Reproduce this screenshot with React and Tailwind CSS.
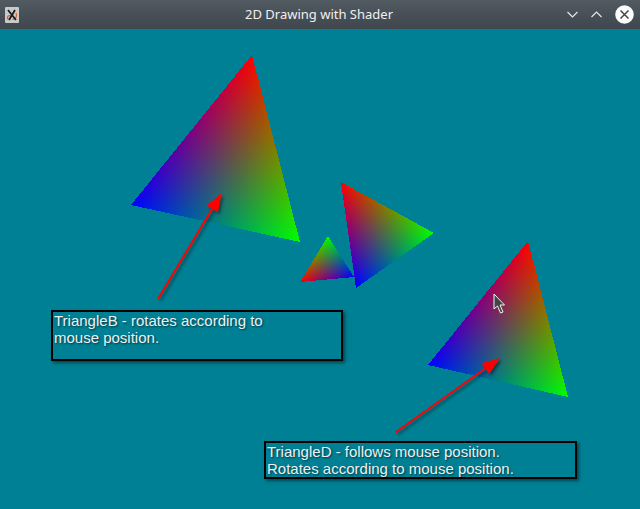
import React from 'react';

const triangles = [
  { id: 'a', pts: [[252, 55], [131, 205], [300, 242]], cols: ['#ff0000', '#0000ff', '#00ff00'] },
  { id: 'b', pts: [[328, 236], [300, 282], [354, 277]], cols: ['#00ff00', '#ff0000', '#0000ff'] },
  { id: 'c', pts: [[341, 182], [434, 233], [356, 288]], cols: ['#ff0000', '#00ff00', '#0000ff'] },
  { id: 'd', pts: [[528, 241], [428, 365], [568, 397]], cols: ['#ff0000', '#0000ff', '#00ff00'] },
];

const arrows = [
  { from: [158, 299], to: [221.5, 193.5] },
  { from: [395.5, 432.5], to: [500, 358] },
];

// foot of the perpendicular from p onto line a-b
function foot(p, a, b) {
  const dx = b[0] - a[0];
  const dy = b[1] - a[1];
  const t = ((p[0] - a[0]) * dx + (p[1] - a[1]) * dy) / (dx * dx + dy * dy);
  return [a[0] + t * dx, a[1] + t * dy];
}

function ShadedTriangle({ tri }) {
  const points = tri.pts.map((p) => p.join(',')).join(' ');
  return (
    <g style={{ isolation: 'isolate' }}>
      <defs>
        {tri.pts.map((p, i) => {
          const f = foot(p, tri.pts[(i + 1) % 3], tri.pts[(i + 2) % 3]);
          return (
            <linearGradient
              key={i}
              id={'g-' + tri.id + i}
              gradientUnits="userSpaceOnUse"
              x1={p[0]}
              y1={p[1]}
              x2={f[0]}
              y2={f[1]}
            >
              <stop offset="0" stopColor={tri.cols[i]} />
              <stop offset="1" stopColor="#000000" />
            </linearGradient>
          );
        })}
      </defs>
      {[0, 1, 2].map((i) => (
        <polygon
          key={i}
          points={points}
          fill={'url(#g-' + tri.id + i + ')'}
          shapeRendering="crispEdges"
          style={i === 0 ? undefined : { mixBlendMode: 'screen' }}
        />
      ))}
    </g>
  );
}

function Arrow({ from, to }) {
  const dx = to[0] - from[0];
  const dy = to[1] - from[1];
  const len = Math.hypot(dx, dy);
  const ux = dx / len;
  const uy = dy / len;
  const bx = to[0] - 18 * ux;
  const by = to[1] - 18 * uy;
  const head = [
    [to[0], to[1]],
    [bx + 6.5 * -uy, by + 6.5 * ux],
    [bx - 6.5 * -uy, by - 6.5 * ux],
  ];
  return (
    <g filter="url(#shadow)">
      <line x1={from[0]} y1={from[1]} x2={bx + 3 * ux} y2={by + 3 * uy} stroke="#ff0000" strokeWidth="2" />
      <polygon points={head.map((p) => p.join(',')).join(' ')} fill="#ff0000" />
    </g>
  );
}

function Note({ className, lines }) {
  return (
    <div
      className={
        'absolute border-2 border-black pl-px text-[15px] leading-[17px] text-[#eef2f4] shadow-[2px_2px_3px_rgba(0,0,0,0.45)] [text-shadow:1px_1px_2px_rgba(0,0,0,0.6)] ' +
        className
      }
    >
      {lines.map((l) => (
        <div key={l} className="whitespace-nowrap">{l}</div>
      ))}
    </div>
  );
}

export default function App() {
  return (
    <div className="w-[640px] h-[509px] flex flex-col overflow-hidden font-['Liberation_Sans',Arial,sans-serif]">
      <div className="h-[29px] flex items-center bg-gradient-to-b from-[#525a62] to-[#3f464d] pl-[5px] pr-[6px]">
        <svg width="14" height="16" viewBox="0 0 14 16">
          <rect x="0" y="0" width="14" height="16" rx="1" fill="#c9cacb" />
          <path d="M3 12.5 C1.5 10 3 8 6 9" stroke="#e0601a" strokeWidth="1.3" fill="none" />
          <path d="M11 6 C12.5 9 11 12 7.5 12.5" stroke="#e0601a" strokeWidth="1.3" fill="none" />
          <path d="M3 3 L11 13 M10 3 L4 13" stroke="#1a1a1a" strokeWidth="1.8" fill="none" />
        </svg>
        <div className="flex-1 text-center text-[13px] text-[#eff0f1] font-['Noto_Sans',sans-serif] pl-[52px]">
          2D Drawing with Shader
        </div>
        <div className="flex items-center gap-[13px]">
          <svg width="11" height="7" viewBox="0 0 11 7">
            <path d="M0.5 1 L5.5 6 L10.5 1" stroke="#e4e7ea" strokeWidth="1.2" fill="none" />
          </svg>
          <svg width="11" height="7" viewBox="0 0 11 7">
            <path d="M0.5 6 L5.5 1 L10.5 6" stroke="#e4e7ea" strokeWidth="1.2" fill="none" />
          </svg>
          <svg width="19" height="19" viewBox="0 0 19 19">
            <circle cx="9.5" cy="9.5" r="9.3" fill="#fcfcfc" />
            <path d="M5.5 5.5 L13.5 13.5 M13.5 5.5 L5.5 13.5" stroke="#3f464d" strokeWidth="1.5" />
          </svg>
        </div>
      </div>

      <div className="relative flex-1 bg-[#008094]">
        <svg className="absolute inset-0" width="640" height="480" viewBox="0 29 640 480">
          <defs>
            <filter id="shadow" x="-20%" y="-20%" width="140%" height="140%">
              <feDropShadow dx="2" dy="2" stdDeviation="1.6" floodColor="#000000" floodOpacity="0.45" />
            </filter>
          </defs>
          {triangles.map((t) => (
            <ShadedTriangle key={t.id} tri={t} />
          ))}
          {arrows.map((a, i) => (
            <Arrow key={i} from={a.from} to={a.to} />
          ))}
          <path
            d="M494 294 L494 309 L497.5 306 L500.5 313 L503 312 L500 305 L504.5 305 Z"
            fill="#444444"
            stroke="#f2f2f2"
            strokeWidth="1"
            strokeLinejoin="round"
          />
        </svg>

        <Note
          className="left-[51px] top-[281px] w-[292px] h-[51px]"
          lines={['TriangleB - rotates according to', 'mouse position.']}
        />
        <Note
          className="left-[264px] top-[412px] w-[313px] h-[38px]"
          lines={['TriangleD - follows mouse position.', 'Rotates according to mouse position.']}
        />
      </div>
    </div>
  );
}
